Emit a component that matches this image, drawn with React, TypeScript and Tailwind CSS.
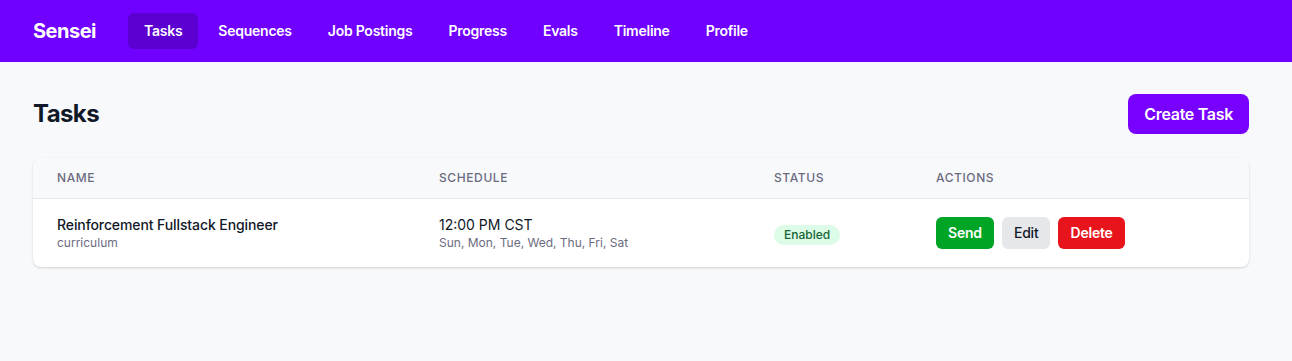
import React from "react";

const navItems = ["Tasks", "Sequences", "Job Postings", "Progress", "Evals", "Timeline", "Profile"];

export default function App() {
  return (
    <div className="min-h-[361px] bg-[#f8f9fb]" style={{ fontFamily: "Inter, 'Noto Sans', sans-serif" }}>
      <nav className="h-[62px] bg-[#7000ff] flex items-center pl-[33px] pr-[43px]">
        <div className="text-white text-xl font-bold mr-8 tracking-[-0.5px]">Sensei</div>
        <div className="flex items-center gap-1">
          {navItems.map((item, i) => (
            <div
              key={item}
              className={
                i === 0
                  ? "px-4 py-2 rounded-md text-sm font-semibold text-white bg-[#5b00d0] tracking-[-0.25px]"
                  : "px-4 py-2 rounded-md text-sm font-semibold text-white tracking-[-0.25px]"
              }
            >
              {item}
            </div>
          ))}
        </div>
      </nav>
      <main className="pl-[33px] pr-[43px] pt-8">
        <div className="flex items-center justify-between mb-6">
          <h1 className="text-2xl font-bold text-[#111827] tracking-[-0.6px]">Tasks</h1>
          <button className="bg-[#7700ff] text-white text-base font-semibold px-4 py-2 rounded-lg tracking-[-0.3px]">Create Task</button>
        </div>
        <div className="bg-white rounded-lg shadow-[0_1px_3px_rgba(0,0,0,0.1),0_1px_2px_rgba(0,0,0,0.06)] overflow-hidden">
          <div className="flex bg-[#f8f9fb] border-b border-[#e5e7eb] text-xs font-medium uppercase tracking-wider text-[#6b6b80]">
            <div className="w-[382px] px-6 py-3">Name</div>
            <div className="w-[335px] px-6 py-3">Schedule</div>
            <div className="w-[162px] px-6 py-3">Status</div>
            <div className="flex-1 px-6 py-3">Actions</div>
          </div>
          <div className="flex items-center">
            <div className="w-[382px] px-6 py-4">
              <div className="text-sm font-medium text-[#111827] tracking-[-0.1px]">Reinforcement Fullstack Engineer</div>
              <div className="text-xs text-[#6b6b80]">curriculum</div>
            </div>
            <div className="w-[335px] px-6 py-4">
              <div className="text-sm text-[#111827]">12:00 PM CST</div>
              <div className="text-xs text-[#6b6b80]">Sun, Mon, Tue, Wed, Thu, Fri, Sat</div>
            </div>
            <div className="w-[162px] px-6 py-4">
              <span className="inline-flex px-2.5 py-0.5 rounded-full text-xs font-medium bg-[#dcfce7] text-[#166534]">Enabled</span>
            </div>
            <div className="flex-1 px-6 py-4 flex items-center gap-2">
              <button className="bg-[#00a526] text-white text-sm font-semibold px-3 py-1.5 rounded-md tracking-[-0.2px]">Send</button>
              <button className="bg-[#e5e7eb] text-[#111827] text-sm font-medium px-3 py-1.5 rounded-md tracking-[-0.2px]">Edit</button>
              <button className="bg-[#e7151b] text-white text-sm font-semibold px-3 py-1.5 rounded-md tracking-[-0.2px]">Delete</button>
            </div>
          </div>
        </div>
      </main>
    </div>
  );
}
